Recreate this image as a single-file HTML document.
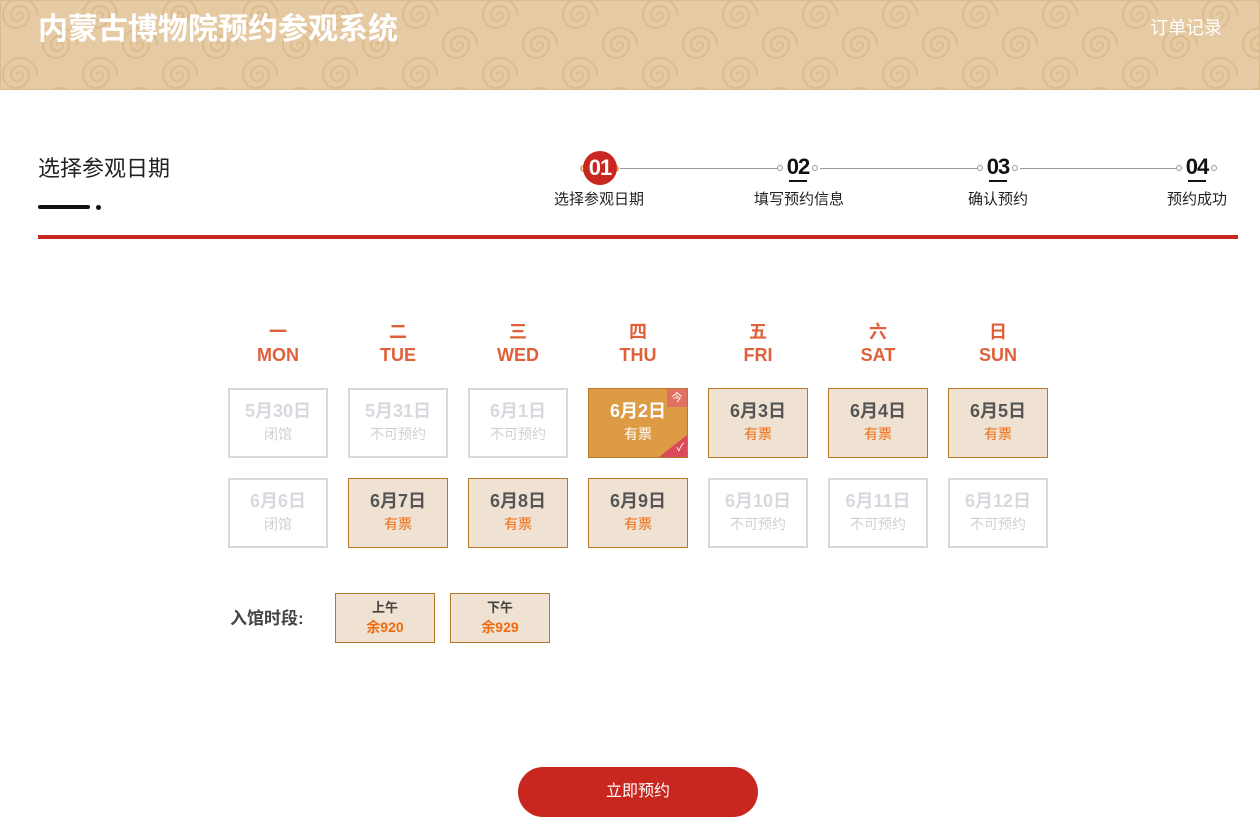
<!DOCTYPE html>
<html><head><meta charset="utf-8"><style>
*{margin:0;padding:0;box-sizing:border-box}
body{width:1260px;height:828px;background:#fff;font-family:"Liberation Sans","Noto Sans CJK SC",sans-serif;position:relative;overflow:hidden}
.hd{position:absolute;left:0;top:0;width:1260px;height:90px;background:#e5caa3;overflow:hidden}
.hd .t{position:absolute;left:38px;top:9px;font-size:30px;font-weight:bold;color:#fff;line-height:42px}
.hd .r{position:absolute;left:1150px;top:16px;font-size:18px;color:#fff;line-height:24px}
.ab{position:absolute}
.cell{position:absolute;width:100px;height:70px;border:2px solid #d8d9de;text-align:center;background:#fff}
.cell .d{font-size:18px;font-weight:bold;color:#d8d9de;margin-top:9px;line-height:24px}
.cell .s{font-size:14px;color:#d0d0d4;line-height:20px;margin-top:1px}
.cell.ok{border:1px solid #b8792c;background:#f0e2d2}
.cell.ok .d{color:#555;margin-top:10px}
.cell.ok .s{color:#f06a10}
.wk{position:absolute;width:100px;text-align:center;color:#e0603a;font-weight:bold;font-size:18px;line-height:23px}
.step{position:absolute;top:188px;width:120px;text-align:center;font-size:15px;color:#222}
.num{position:absolute;top:154px;font-size:22px;font-weight:bold;color:#111;width:40px;text-align:center;letter-spacing:-1px}
.ul{position:absolute;top:180px;width:18px;height:2px;background:#111}
</style></head><body>
<div class="hd">
<svg width="1260" height="90" style="position:absolute;left:0;top:0" fill="none" stroke="#d9b887" stroke-width="2" opacity=".75">
<defs>
<g id="sw"><path d="M0 0 m-3 0 a3 3 0 1 1 6 0 a6 6 0 1 1 -12 0 a9 9 0 1 1 18 0 a13 13 0 1 1 -26 0 a17 17 0 1 1 34 0"/></g>
<pattern id="p" width="80" height="60" patternUnits="userSpaceOnUse"><use href="#sw" x="20" y="15"/><use href="#sw" x="60" y="45"/><use href="#sw" x="60" y="-15"/><use href="#sw" x="-20" y="45"/><use href="#sw" x="20" y="75"/></pattern>
</defs>
<rect width="1260" height="90" fill="url(#p)"/>
</svg>
<div class="t">内蒙古博物院预约参观系统</div>
<div class="r">订单记录</div>
</div>

<div class="ab" style="left:38px;top:154px;font-size:22px;color:#222;line-height:30px">选择参观日期</div>
<div class="ab" style="left:38px;top:205px;width:52px;height:4px;background:#111;border-radius:2px"></div>
<div class="ab" style="left:96px;top:205px;width:5px;height:5px;background:#111;border-radius:50%"></div>

<div class="ab" style="left:620px;top:168px;width:158px;height:1px;background:#999"></div>
<div class="ab" style="left:820px;top:168px;width:158px;height:1px;background:#999"></div>
<div class="ab" style="left:1020px;top:168px;width:156px;height:1px;background:#999"></div>
<div class="ab" style="left:580px;top:165px;width:7px;height:7px;border-radius:50%;border:2px solid #e8a85a"></div>
<div class="ab" style="left:612px;top:165px;width:7px;height:7px;border-radius:50%;border:2px solid #e8a85a"></div>
<div class="ab" style="left:583px;top:151px;width:34px;height:34px;border-radius:50%;background:#c8271f;color:#fff;font-weight:bold;font-size:22px;text-align:center;line-height:34px;letter-spacing:-1px">01</div>
<div class="num" style="left:778px">02</div><div class="ul" style="left:789px"></div>
<div class="num" style="left:978px">03</div><div class="ul" style="left:989px"></div>
<div class="num" style="left:1177px">04</div><div class="ul" style="left:1188px"></div>
<div class="ab" style="left:777px;top:165px;width:6px;height:6px;border-radius:50%;border:1.5px solid #999"></div>
<div class="ab" style="left:812px;top:165px;width:6px;height:6px;border-radius:50%;border:1.5px solid #999"></div>
<div class="ab" style="left:977px;top:165px;width:6px;height:6px;border-radius:50%;border:1.5px solid #999"></div>
<div class="ab" style="left:1012px;top:165px;width:6px;height:6px;border-radius:50%;border:1.5px solid #999"></div>
<div class="ab" style="left:1176px;top:165px;width:6px;height:6px;border-radius:50%;border:1.5px solid #999"></div>
<div class="ab" style="left:1211px;top:165px;width:6px;height:6px;border-radius:50%;border:1.5px solid #999"></div>
<div class="step" style="left:539px">选择参观日期</div>
<div class="step" style="left:739px">填写预约信息</div>
<div class="step" style="left:938px">确认预约</div>
<div class="step" style="left:1137px">预约成功</div>

<div class="ab" style="left:38px;top:235px;width:1200px;height:4px;background:#c8271f"></div>

<div class="wk" style="left:228px;top:321px">一<br>MON</div>
<div class="wk" style="left:348px;top:321px">二<br>TUE</div>
<div class="wk" style="left:468px;top:321px">三<br>WED</div>
<div class="wk" style="left:588px;top:321px">四<br>THU</div>
<div class="wk" style="left:708px;top:321px">五<br>FRI</div>
<div class="wk" style="left:828px;top:321px">六<br>SAT</div>
<div class="wk" style="left:948px;top:321px">日<br>SUN</div>

<div class="cell" style="left:228px;top:388px"><div class="d">5月30日</div><div class="s">闭馆</div></div>
<div class="cell" style="left:348px;top:388px"><div class="d">5月31日</div><div class="s">不可预约</div></div>
<div class="cell" style="left:468px;top:388px"><div class="d">6月1日</div><div class="s">不可预约</div></div>
<div class="cell ok" style="left:588px;top:388px;background:#dc9b44;border-color:#b8792c;overflow:hidden"><div class="d" style="color:#fff">6月2日</div><div class="s" style="color:#fff">有票</div>
<div class="ab" style="right:0;top:0;width:20px;height:18px;background:#e07060;color:#fff;font-size:11px;line-height:18px">今</div>
<div class="ab" style="right:0;bottom:0;width:0;height:0;border-left:28px solid transparent;border-bottom:22px solid #dc4a5a"></div>
<div class="ab" style="right:3px;bottom:2px;color:#fff;font-size:11px">✓</div></div>
<div class="cell ok" style="left:708px;top:388px"><div class="d">6月3日</div><div class="s">有票</div></div>
<div class="cell ok" style="left:828px;top:388px"><div class="d">6月4日</div><div class="s">有票</div></div>
<div class="cell ok" style="left:948px;top:388px"><div class="d">6月5日</div><div class="s">有票</div></div>

<div class="cell" style="left:228px;top:478px"><div class="d">6月6日</div><div class="s">闭馆</div></div>
<div class="cell ok" style="left:348px;top:478px"><div class="d">6月7日</div><div class="s">有票</div></div>
<div class="cell ok" style="left:468px;top:478px"><div class="d">6月8日</div><div class="s">有票</div></div>
<div class="cell ok" style="left:588px;top:478px"><div class="d">6月9日</div><div class="s">有票</div></div>
<div class="cell" style="left:708px;top:478px"><div class="d">6月10日</div><div class="s">不可预约</div></div>
<div class="cell" style="left:828px;top:478px"><div class="d">6月11日</div><div class="s">不可预约</div></div>
<div class="cell" style="left:948px;top:478px"><div class="d">6月12日</div><div class="s">不可预约</div></div>

<div class="ab" style="left:230px;top:608px;font-size:17px;font-weight:bold;color:#444;line-height:22px">入馆时段:</div>
<div class="ab" style="left:335px;top:593px;width:100px;height:50px;border:1px solid #b8792c;background:#f0e2d2;text-align:center"><div style="font-size:13px;font-weight:bold;color:#444;margin-top:5px;line-height:18px">上午</div><div style="font-size:14px;font-weight:bold;color:#f06a10;line-height:20px">余920</div></div>
<div class="ab" style="left:450px;top:593px;width:100px;height:50px;border:1px solid #b8792c;background:#f0e2d2;text-align:center"><div style="font-size:13px;font-weight:bold;color:#444;margin-top:5px;line-height:18px">下午</div><div style="font-size:14px;font-weight:bold;color:#f06a10;line-height:20px">余929</div></div>

<div class="ab" style="left:518px;top:767px;width:240px;height:50px;border-radius:25px;background:#c8271f;color:#fff;font-size:16px;text-align:center;line-height:50px">立即预约</div>
</body></html>
